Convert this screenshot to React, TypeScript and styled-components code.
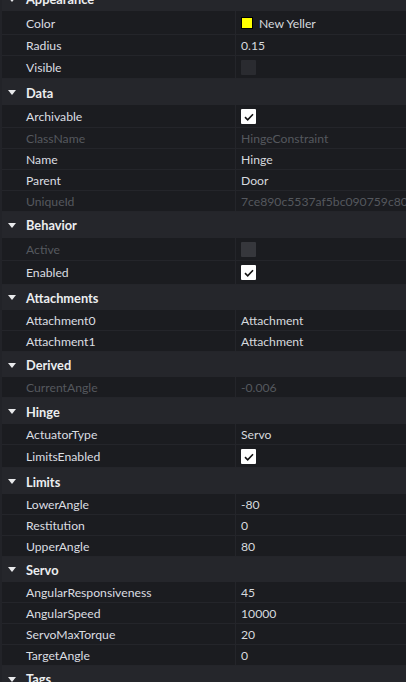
import styled, { createGlobalStyle } from 'styled-components';

const GlobalStyle = createGlobalStyle`
  html, body {
    margin: 0;
    padding: 0;
    background: #1b1c20;
  }
  body {
    font-family: Lato, "Liberation Sans", sans-serif;
    -webkit-font-smoothing: antialiased;
  }
`;

const Panel = styled.div`
  width: 406px;
  height: 682px;
  overflow: hidden;
  background: #1b1c20;
  display: flex;
  border-left: 2px solid #222328;
  box-sizing: border-box;
`;

const List = styled.div`
  flex: 1;
  display: flex;
  flex-direction: column;
  margin-top: -14px;
  min-width: 0;
`;

const Section = styled.section`
  display: contents;
`;

const Header = styled.div`
  height: 25.4px;
  flex-shrink: 0;
  display: flex;
  align-items: center;
  padding-top: 1px;
  background: #25262b;
  color: #eceef0;
  font-weight: 700;
  font-size: 12.8px;
  box-sizing: border-box;
`;

const Caret = styled.svg`
  width: 8px;
  height: 5px;
  margin: 0 10px 0 6px;
`;

const Row = styled.div<{ $tall?: boolean }>`
  height: ${(p) => (p.$tall ? '23.5px' : '21px')};
  flex-shrink: 0;
  display: grid;
  grid-template-columns: 234px 1fr;
  background: #1b1c20;
  border-bottom: 1px solid #24252a;
  box-sizing: border-box;
  font-size: 12.2px;
`;

const Name = styled.div<{ $disabled?: boolean }>`
  display: flex;
  align-items: center;
  padding: 1px 0 0 24px;
  color: ${(p) => (p.$disabled ? '#55585e' : '#dcdee2')};
  border-right: 1px solid #24252a;
  white-space: nowrap;
  overflow: hidden;
`;

const Value = styled.div<{ $disabled?: boolean }>`
  display: flex;
  align-items: center;
  gap: 6px;
  padding: 1px 0 0 5px;
  color: ${(p) => (p.$disabled ? '#55585e' : '#d6d9de')};
  white-space: nowrap;
  overflow: hidden;
`;

const Swatch = styled.span<{ $color: string }>`
  width: 10px;
  height: 10px;
  background: ${(p) => p.$color};
  border: 1px solid #000;
  flex-shrink: 0;
`;

const Box = styled.span<{ $checked?: boolean; $disabled?: boolean }>`
  width: 15px;
  height: 15px;
  border-radius: 1px;
  display: flex;
  align-items: center;
  justify-content: center;
  background: ${(p) => (p.$checked ? '#ffffff' : p.$disabled ? '#36373c' : '#2a2b30')};
  box-sizing: border-box;
  flex-shrink: 0;
`;

type Prop = {
  name: string;
  value?: string;
  disabled?: boolean;
  check?: 'on' | 'off';
  color?: string;
};

type Group = { title: string; props: Prop[] };

const groups: Group[] = [
  {
    title: 'Appearance',
    props: [
      { name: 'Color', value: 'New Yeller', color: '#ffff00' },
      { name: 'Radius', value: '0.15' },
      { name: 'Visible', check: 'off' },
    ],
  },
  {
    title: 'Data',
    props: [
      { name: 'Archivable', check: 'on' },
      { name: 'ClassName', value: 'HingeConstraint', disabled: true },
      { name: 'Name', value: 'Hinge' },
      { name: 'Parent', value: 'Door' },
      { name: 'UniqueId', value: '7ce890c5537af5bc090759c80000950e', disabled: true },
    ],
  },
  {
    title: 'Behavior',
    props: [
      { name: 'Active', check: 'off', disabled: true },
      { name: 'Enabled', check: 'on' },
    ],
  },
  {
    title: 'Attachments',
    props: [
      { name: 'Attachment0', value: 'Attachment' },
      { name: 'Attachment1', value: 'Attachment' },
    ],
  },
  {
    title: 'Derived',
    props: [{ name: 'CurrentAngle', value: '-0.006', disabled: true }],
  },
  {
    title: 'Hinge',
    props: [
      { name: 'ActuatorType', value: 'Servo' },
      { name: 'LimitsEnabled', check: 'on' },
    ],
  },
  {
    title: 'Limits',
    props: [
      { name: 'LowerAngle', value: '-80' },
      { name: 'Restitution', value: '0' },
      { name: 'UpperAngle', value: '80' },
    ],
  },
  {
    title: 'Servo',
    props: [
      { name: 'AngularResponsiveness', value: '45' },
      { name: 'AngularSpeed', value: '10000' },
      { name: 'ServoMaxTorque', value: '20' },
      { name: 'TargetAngle', value: '0' },
    ],
  },
  { title: 'Tags', props: [] },
];

const Check = () => (
  <svg width="10" height="8" viewBox="0 0 10 8">
    <path d="M1 4.2 L3.7 6.8 L9 1.2" fill="none" stroke="#111" strokeWidth="1.6" />
  </svg>
);

const PropRow = ({ p }: { p: Prop }) => (
  <Row $tall={!!p.check || !!p.color}>
    <Name $disabled={p.disabled}>{p.name}</Name>
    <Value $disabled={p.disabled}>
      {p.color && <Swatch $color={p.color} />}
      {p.check && (
        <Box $checked={p.check === 'on'} $disabled={p.disabled}>
          {p.check === 'on' && <Check />}
        </Box>
      )}
      {p.value}
    </Value>
  </Row>
);

const App = () => {
  return (
    <>
      <GlobalStyle />
      <Panel>
        <List>
          {groups.map((g) => (
            <Section key={g.title}>
              <Header>
                <Caret viewBox="0 0 8 5">
                  <path d="M0 0 H8 L4 5 Z" fill="#e9eaec" />
                </Caret>
                {g.title}
              </Header>
              {g.props.map((p) => (
                <PropRow key={p.name} p={p} />
              ))}
            </Section>
          ))}
        </List>
      </Panel>
    </>
  );
};

export default App;
